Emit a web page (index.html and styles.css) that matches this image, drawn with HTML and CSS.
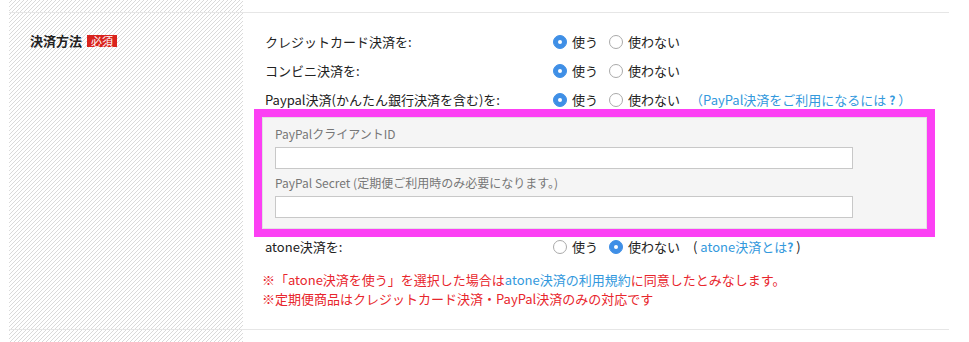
FILE: index.html
```html
<!DOCTYPE html>
<html lang="ja">
<head>
    <meta charset="UTF-8">
    <meta name="viewport" content="width=device-width, initial-scale=1.0">
    <title>決済方法</title>
    <link rel="stylesheet" href="styles.css">
</head>
<body>
    <div class="form">
        <div class="form-row">
            <div class="form-head">
                決済方法 <span class="required">必須</span>
            </div>
            <div class="form-body">
                <div class="opt-row">
                    <div class="opt-name">クレジットカード決済を:</div>
                    <label class="opt"><input type="radio" name="credit" checked> 使う</label>
                    <label class="opt"><input type="radio" name="credit"> 使わない</label>
                </div>
                <div class="opt-row">
                    <div class="opt-name">コンビニ決済を:</div>
                    <label class="opt"><input type="radio" name="cvs" checked> 使う</label>
                    <label class="opt"><input type="radio" name="cvs"> 使わない</label>
                </div>
                <div class="opt-row">
                    <div class="opt-name">Paypal決済(かんたん銀行決済を含む)を:</div>
                    <label class="opt"><input type="radio" name="paypal" checked> 使う</label>
                    <label class="opt"><input type="radio" name="paypal"> 使わない</label>
                    <a class="help" href="#">（PayPal決済をご利用になるには <b>?</b> ）</a>
                </div>

                <div class="paypal-box">
                    <div class="paypal-inner">
                        <label class="field-label" for="clientId">PayPalクライアントID</label>
                        <input class="field" type="text" id="clientId">
                        <label class="field-label" for="secret">PayPal Secret (定期便ご利用時のみ必要になります。)</label>
                        <input class="field" type="text" id="secret">
                    </div>
                </div>

                <div class="opt-row">
                    <div class="opt-name">atone決済を:</div>
                    <label class="opt"><input type="radio" name="atone"> 使う</label>
                    <label class="opt"><input type="radio" name="atone" checked> 使わない</label>
                    <span class="help-plain">( <a href="#">atone決済とは<b>?</b></a> )</span>
                </div>

                <p class="notes">
                    ※「atone決済を使う」を選択した場合は<a href="#">atone決済の利用規約</a>に同意したとみなします。<br>
                    ※定期便商品はクレジットカード決済・PayPal決済のみの対応です
                </p>
            </div>
        </div>
    </div>
</body>
</html>
```

FILE: styles.css
```css
body {
    margin: 0;
    font-family: "Noto Sans CJK JP", sans-serif;
    font-size: 13px;
    color: #222;
    background-color: white;
}
a {
    color: #3399dd;
    text-decoration: none;
}
.form {
    margin-left: 9px;
    width: 940px;
    height: 342px;
    box-sizing: border-box;
    padding-top: 12px;
    /* hatched stripe behind the heading column */
    background-image: repeating-linear-gradient(135deg, #fff 0 2.03px, #dadada 2.03px 2.828px);
    background-size: 234px 100%;
    background-repeat: no-repeat;
}
.form-row {
    display: grid;
    grid-template-columns: 234px 1fr;
    border-top: 1px solid #e6e6e6;
    border-bottom: 1px solid #e6e6e6;
}
.form-head {
    padding: 20px 0 0 21px;
    font-weight: bold;
    line-height: 16px;
    display: flex;
    align-items: flex-start;
    gap: 5px;
}
.required {
    background-color: #d9231d;
    color: white;
    font-size: 11px;
    font-weight: normal;
    line-height: 12px;
    padding: 0 4px;
    margin-top: 2px;
}
.form-body {
    padding: 14px 0 21px 22px;
}
.opt-row {
    display: flex;
    align-items: center;
    height: 29px;
    line-height: 16px;
}
.opt-name {
    width: 288px;
}
.opt {
    display: flex;
    align-items: center;
    gap: 5px;
    margin-right: 11px;
}
.opt input {
    appearance: none;
    margin: 0;
    width: 14px;
    height: 14px;
    border-radius: 50%;
    border: 1px solid #aaa;
    background-color: white;
    box-sizing: border-box;
    position: relative;
}
.opt input:checked {
    background-color: #3f8fe6;
    border-color: #3f8fe6;
}
.opt input:checked::after {
    content: "";
    position: absolute;
    left: 4px;
    top: 4px;
    width: 4px;
    height: 4px;
    border-radius: 50%;
    background-color: white;
}
.help b, .help-plain b {
    font-weight: bold;
    font-size: 12px;
}
.help {
    margin-left: -1px;
}
.help-plain {
    margin-left: 2px;
}
.paypal-box {
    margin: -5px 0 -5px -11px;
    width: 681px;
    border: 8px solid #fc40f4;
    box-sizing: border-box;
}
.paypal-inner {
    background-color: #f5f5f5;
    border: 1px solid #e2e2e2;
    padding: 8px 0 10px 12px;
}
.field-label {
    display: block;
    font-size: 12px;
    color: #777;
    line-height: 16px;
    margin-bottom: 5px;
}
.field {
    display: block;
    width: 578px;
    height: 22px;
    box-sizing: border-box;
    border: 1px solid #c8c8c8;
    background-color: white;
    margin-bottom: 6px;
}
.field:last-child {
    margin-bottom: 0;
}
.notes {
    margin: 9px 0 0 -3px;
    color: #e8262d;
    line-height: 19px;
}
```
